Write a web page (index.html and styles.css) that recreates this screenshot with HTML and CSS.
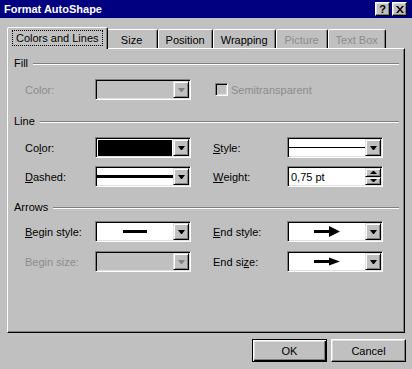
FILE: index.html
```html
<!DOCTYPE html>
<html>
<head>
    <link rel="stylesheet" href="styles.css">
</head>
<body>
    <div class="window">
        <div class="titlebar">
            <span class="title">Format AutoShape</span>
            <div class="title-buttons">
                <span class="tbtn">?</span>
                <span class="tbtn">
                    <svg width="8" height="7" viewBox="0 0 8 7"><path d="M0 0h2l2 2.4L6 0h2L5 3.5 8 7H6L4 4.6 2 7H0l3-3.5z" fill="#000"/></svg>
                </span>
            </div>
        </div>

        <div class="tabs">
            <div class="tab active"><span class="focus">Colors and Lines</span></div>
            <div class="tab">Size</div>
            <div class="tab">Position</div>
            <div class="tab">Wrapping</div>
            <div class="tab disabled">Picture</div>
            <div class="tab disabled">Text Box</div>
        </div>

        <div class="panel">
            <div class="group">
                <div class="group-title">Fill</div>
                <div class="rows">
                    <span class="label disabled">Color:</span>
                    <div class="combo disabled"><div class="value"></div><span class="drop"></span></div>
                    <div class="check disabled"><span class="box"></span>Semitransparent</div>
                </div>
            </div>

            <div class="group">
                <div class="group-title">Line</div>
                <div class="rows">
                    <span class="label">Co<u>l</u>or:</span>
                    <div class="combo"><div class="value swatch"></div><span class="drop"></span></div>
                    <span class="label label-right"><u>S</u>tyle:</span>
                    <div class="combo"><div class="value"><span class="line thin"></span></div><span class="drop"></span></div>

                    <span class="label"><u>D</u>ashed:</span>
                    <div class="combo"><div class="value"><span class="line thick"></span></div><span class="drop"></span></div>
                    <span class="label label-right"><u>W</u>eight:</span>
                    <div class="combo spin">
                        <div class="value text">0,75 pt</div>
                        <div class="spin-buttons"><span class="spin-btn up"></span><span class="spin-btn down"></span></div>
                    </div>
                </div>
            </div>

            <div class="group group-arrows">
                <div class="group-title">Arrows</div>
                <div class="rows">
                    <span class="label"><u>B</u>egin style:</span>
                    <div class="combo"><div class="value"><svg width="24" height="3"><rect width="24" height="3" fill="#000"/></svg></div><span class="drop"></span></div>
                    <span class="label label-right"><u>E</u>nd style:</span>
                    <div class="combo"><div class="value"><svg width="26" height="11"><rect x="0" y="4" width="16" height="3" fill="#000"/><path d="M15 0L26 5.5 15 11z" fill="#000"/></svg></div><span class="drop"></span></div>

                    <span class="label disabled">Begin size:</span>
                    <div class="combo disabled"><div class="value"></div><span class="drop"></span></div>
                    <span class="label label-right">End si<u>z</u>e:</span>
                    <div class="combo"><div class="value"><svg width="26" height="9"><rect x="0" y="3" width="16" height="3" fill="#000"/><path d="M15 0.5L26 4.5 15 8.5z" fill="#000"/></svg></div><span class="drop"></span></div>
                </div>
            </div>
        </div>

        <div class="footer">
            <button class="btn default">OK</button>
            <button class="btn">Cancel</button>
        </div>
    </div>
</body>
</html>
```

FILE: styles.css
```css
body {
    margin: 0;
    background: #c0c0c0;
    font-family: "Liberation Sans", Arial, sans-serif;
    font-size: 11px;
    color: #000;
}
.window {
    width: 412px;
    height: 369px;
    overflow: hidden;
}
.titlebar {
    height: 18px;
    box-sizing: border-box;
    background: #000080;
    color: #fff;
    display: flex;
    align-items: center;
    justify-content: space-between;
    padding: 0 5px 0 4px;
}
.title {
    font-weight: bold;
}
.title-buttons {
    display: flex;
    gap: 2px;
}
.tbtn {
    width: 15px;
    height: 14px;
    box-sizing: border-box;
    background: #c0c0c0;
    color: #000;
    font-weight: bold;
    border: 1px solid;
    border-color: #fff #000 #000 #fff;
    box-shadow: inset -1px -1px #808080, inset 1px 1px #dfdfdf;
    display: flex;
    align-items: center;
    justify-content: center;
}

/* tabs */
.tabs {
    display: flex;
    align-items: flex-end;
    height: 21px;
    margin-top: 9px;
    padding-left: 9px;
}
.tab {
    height: 19px;
    min-width: 52px;
    box-sizing: border-box;
    padding: 1px 7px 0;
    display: flex;
    align-items: center;
    justify-content: center;
    background: #c0c0c0;
    border: 1px solid;
    border-bottom: 0;
    border-color: #fff #000 transparent #fff;
    border-radius: 2px 2px 0 0;
    box-shadow: inset -1px 0 #808080;
}
.tab.active {
    height: 22px;
    margin: 0 -2px -1px;
    padding: 0 8px 2px;
    position: relative;
    z-index: 1;
}
.tab.disabled {
    color: #8c8c8c;
}
.focus {
    outline: 1px dotted #000;
    padding: 1px 3px;
    margin: -1px -3px;
}

/* panel */
.panel {
    margin: 0 7px;
    height: 285px;
    box-sizing: border-box;
    border: 1px solid;
    border-color: #fff #000 #000 #fff;
    box-shadow: inset -1px -1px #808080;
    padding: 7px 5px 0 6px;
}
.group + .group {
    margin-top: 14px;
}
.group-title {
    display: flex;
    align-items: center;
    gap: 5px;
    height: 14px;
}
.group-title::after {
    content: "";
    flex: 1;
    margin-top: 2px;
    border-top: 1px solid #808080;
    border-bottom: 1px solid #fff;
}
.rows {
    display: grid;
    grid-template-columns: 70px 96px 96px 96px;
    row-gap: 8px;
    margin-top: 9px;
    padding-left: 11px;
}
.group + .group-arrows {
    margin-top: 13px;
}
.group-arrows .rows {
    margin-top: 7px;
    row-gap: 9px;
}
.label {
    display: flex;
    align-items: center;
}
.label-right {
    padding-left: 22px;
}
.disabled {
    color: #8c8c8c;
}

/* combo boxes */
.combo {
    height: 21px;
    box-sizing: border-box;
    display: flex;
    padding: 1px;
    background: #fff;
    border: 1px solid;
    border-color: #808080 #fff #fff #808080;
    box-shadow: inset 1px 1px #000, inset -1px -1px #dfdfdf;
}
.combo.disabled {
    background: #c0c0c0;
}
.value {
    flex: 1;
    display: flex;
    align-items: center;
    justify-content: center;
}
.value.swatch {
    background: #000;
    margin: 1px 1px 0 1px;
}
.value.text {
    justify-content: flex-start;
    padding-left: 2px;
}
.line {
    flex: 1;
    background: #000;
}
.line.thin {
    height: 1px;
}
.line.thick {
    height: 3px;
}
.drop,
.spin-btn {
    width: 16px;
    box-sizing: border-box;
    background: #c0c0c0;
    border: 1px solid;
    border-color: #dfdfdf #000 #000 #dfdfdf;
    box-shadow: inset 1px 1px #fff, inset -1px -1px #808080;
    display: flex;
    align-items: center;
    justify-content: center;
}
.drop::after {
    content: "";
    width: 1px;
    border-top: 4px solid #000;
    border-left: 3px solid transparent;
    border-right: 3px solid transparent;
}
.combo.disabled .drop::after {
    border-top-color: #808080;
}
.spin-buttons {
    width: 16px;
    display: flex;
    flex-direction: column;
}
.spin-btn {
    flex: 1;
}
.spin-btn.up::after {
    content: "";
    width: 1px;
    border-bottom: 3px solid #000;
    border-left: 3px solid transparent;
    border-right: 3px solid transparent;
}
.spin-btn.down::after {
    content: "";
    width: 1px;
    border-top: 3px solid #000;
    border-left: 3px solid transparent;
    border-right: 3px solid transparent;
}

/* checkbox */
.check {
    grid-column: 3 / 5;
    padding-left: 24px;
    display: flex;
    align-items: center;
    gap: 3px;
}
.box {
    width: 13px;
    height: 13px;
    box-sizing: border-box;
    background: #c0c0c0;
    border: 1px solid;
    border-color: #808080 #fff #fff #808080;
    box-shadow: inset 1px 1px #000, inset -1px -1px #dfdfdf;
}

/* buttons */
.footer {
    display: flex;
    justify-content: flex-end;
    gap: 4px;
    padding: 6px 6px 0 0;
}
.btn {
    width: 75px;
    height: 23px;
    padding: 0;
    font: inherit;
    color: #000;
    background: #c0c0c0;
    border: 1px solid;
    border-color: #fff #000 #000 #fff;
    box-shadow: inset -1px -1px #808080, inset 1px 1px #dfdfdf;
}
.btn.default {
    border-color: #000;
    box-shadow: inset 1px 1px #fff, inset -1px -1px #000, inset -2px -2px #808080, inset 2px 2px #dfdfdf;
}
```
